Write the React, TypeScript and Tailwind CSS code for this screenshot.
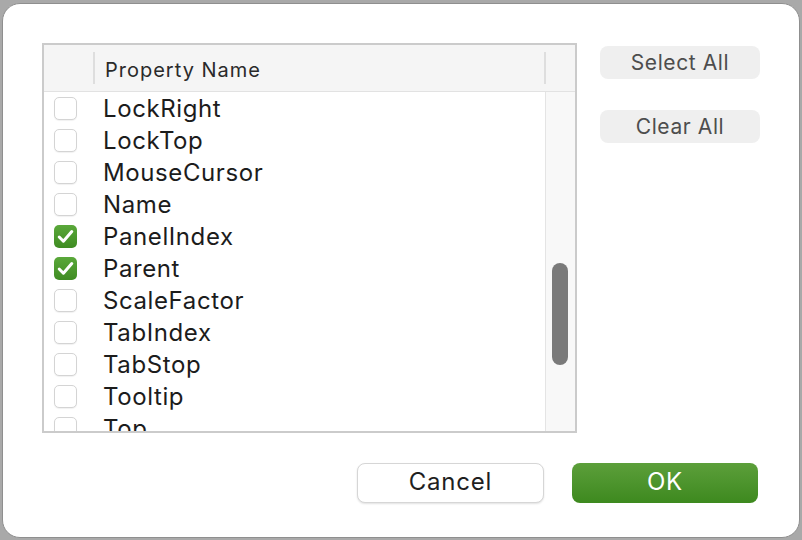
import React from "react";

const rows = [
  { name: "LockRight", checked: false },
  { name: "LockTop", checked: false },
  { name: "MouseCursor", checked: false },
  { name: "Name", checked: false },
  { name: "PanelIndex", checked: true },
  { name: "Parent", checked: true },
  { name: "ScaleFactor", checked: false },
  { name: "TabIndex", checked: false },
  { name: "TabStop", checked: false },
  { name: "Tooltip", checked: false },
  { name: "Top", checked: false },
];

function Checkbox({ checked }: { checked: boolean }) {
  if (checked) {
    return (
      <div className="w-[23px] h-[23px] rounded-[5px] bg-gradient-to-b from-[#5aa83a] to-[#3f8c22] flex items-center justify-center">
        <svg width="17" height="15" viewBox="0 0 17 15" fill="none">
          <path d="M2.2 8 L6.4 12.2 L14.8 2.6" stroke="white" strokeWidth="3" strokeLinecap="round" strokeLinejoin="round" />
        </svg>
      </div>
    );
  }
  return (
    <div className="w-[23px] h-[23px] rounded-[5px] bg-white border border-[#d4d4d4] shadow-[0_1px_1px_rgba(0,0,0,0.06)]" />
  );
}

export default function App() {
  return (
    <div className="w-[802px] h-[540px] bg-[#a9a9a9] pt-[3px] pl-[2px] pr-[2px] pb-[2px]" style={{ fontFamily: "Inter, 'Liberation Sans', sans-serif" }}>
      <div className="w-full h-full bg-white rounded-[18px] border border-[#8f8f8f] pt-[39px] pl-[39px] pr-[39px] flex flex-col">
        <div className="flex">
          {/* property table */}
          <div className="w-[535px] h-[390px] border-2 border-[#cbcbcb] flex flex-col overflow-hidden">
            <div className="h-[47px] bg-[#f5f5f5] border-b border-[#e2e2e2] flex items-center shrink-0">
              <div className="w-[49px] h-full" />
              <div className="w-[2px] h-[32px] bg-[#dedede]" />
              <div className="flex-1 pl-[10px] pt-[3px] text-[20px] tracking-[1px] text-[#2a2a2a]">Property Name</div>
              <div className="w-[2px] h-[32px] bg-[#dedede] mr-[29px]" />
            </div>
            <div className="flex flex-1 min-h-0">
              <div className="flex-1 flex flex-col">
                {rows.map((r) => (
                  <div key={r.name} className="h-[32px] shrink-0 flex items-center">
                    <div className="w-[59px] pl-[10px] shrink-0">
                      <Checkbox checked={r.checked} />
                    </div>
                    <span className="mt-[2px] text-[24px] tracking-[0.6px] text-[#1c1c1c] leading-none">{r.name}</span>
                  </div>
                ))}
              </div>
              <div className="w-[30px] bg-[#f8f8f8] border-l border-[#e4e4e4] shrink-0">
                <div className="mt-[171px] ml-[6px] w-[16px] h-[102px] rounded-full bg-[#7a7a7a]" />
              </div>
            </div>
          </div>
          {/* side buttons */}
          <div className="ml-[23px] w-[160px] flex flex-col gap-[31px] pt-[3px]">
            <div className="h-[33px] rounded-[8px] bg-[#efefef] flex items-center justify-center pt-[1px] text-[21px] tracking-[0.6px] text-[#4d4d4d]">Select All</div>
            <div className="h-[33px] rounded-[8px] bg-[#efefef] flex items-center justify-center pt-[1px] text-[21px] tracking-[0.6px] text-[#4d4d4d]">Clear All</div>
          </div>
        </div>
        <div className="flex justify-end gap-[28px] mt-[30px] pr-[2px]">
          <div className="w-[187px] h-[40px] rounded-[8px] bg-white border border-[#d6d6d6] shadow-[0_1px_2px_rgba(0,0,0,0.12)] flex items-center justify-center pb-[3px] text-[24px] tracking-[0.8px] text-[#1f1f1f]">Cancel</div>
          <div className="w-[186px] h-[40px] rounded-[8px] bg-gradient-to-b from-[#5c9f3a] to-[#3d891e] flex items-center justify-center pb-[2px] text-[24px] tracking-[0.8px] text-white">OK</div>
        </div>
      </div>
    </div>
  );
}
